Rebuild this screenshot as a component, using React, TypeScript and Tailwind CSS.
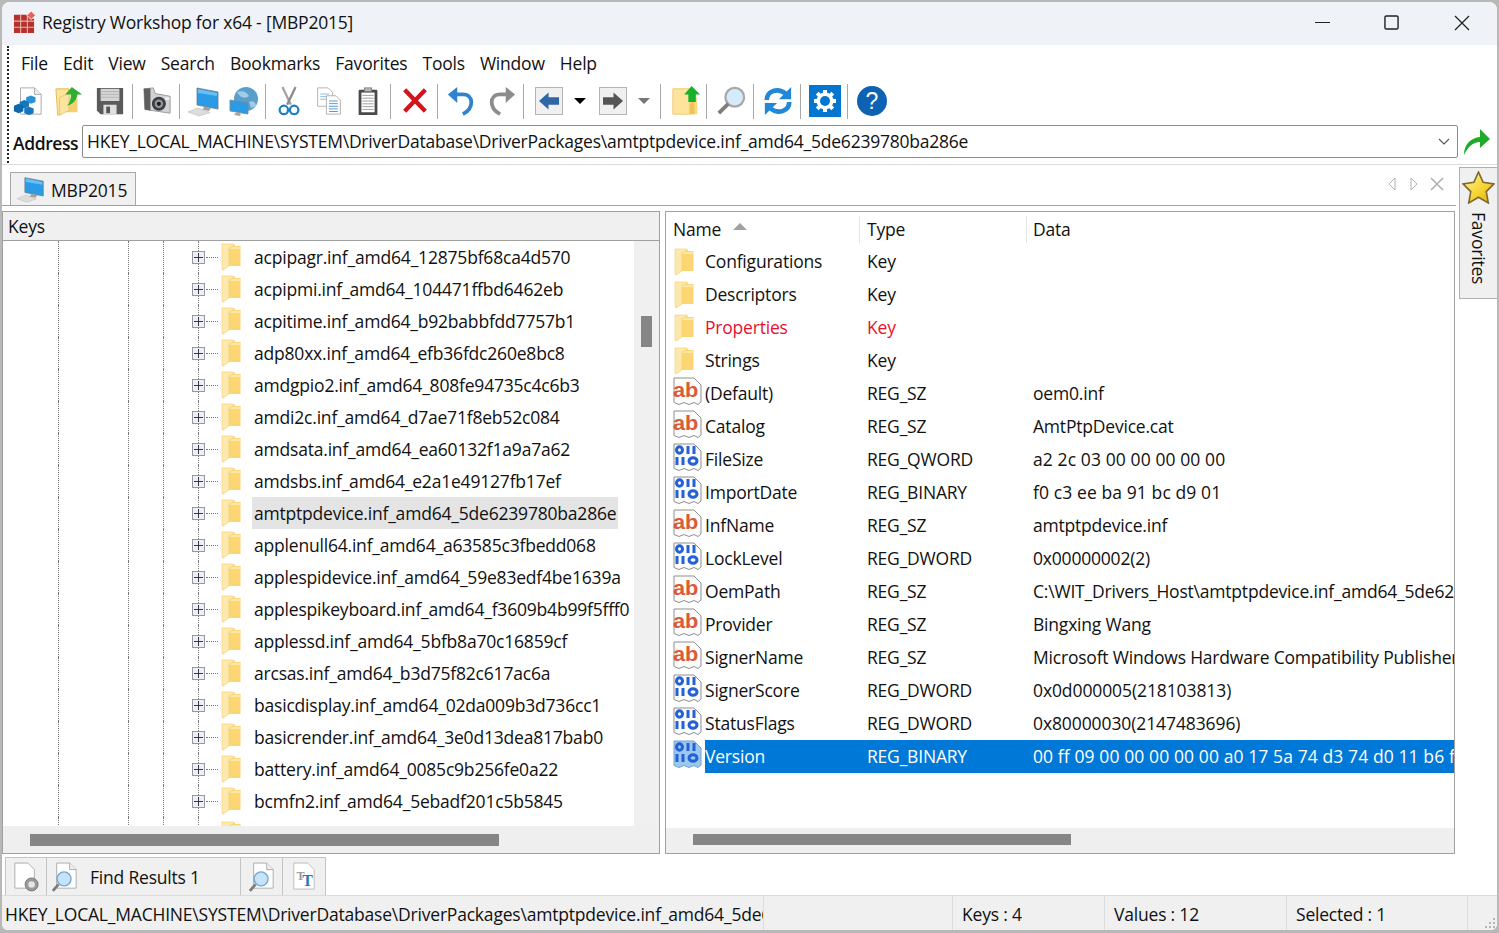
import React from "react";

function Folder({ className = "" }: { className?: string }) {
  return (
    <svg viewBox="0 0 20 28" className={className}>
      <path d="M1 1 H13 L14 3 H19.5 V23 H7 L2 27 L1 26 Z" fill="#fbd672" />
      <path d="M8 4 H19.5 V6 H8 Z" fill="#fde7a6" />
      <path d="M1 1 H13 V3 L8 4.5 V23 L2 27 L1 26 Z" fill="#fde9ad" stroke="#f3cc68" strokeWidth="0.6" />
    </svg>
  );
}

function PageEdge() {
  return (
    <path
      d="M3 2 H23 L30 9 V26 L27 28.5 L23 26.5 L18 28.5 L13 26.5 L8 28.5 L3 26.5 Z"
      fill="#fcfcfc"
      stroke="#8f8f8f"
      strokeWidth="1"
    />
  );
}

function AbIcon() {
  return (
    <svg viewBox="0 0 32 32" className="w-[32px] h-[32px] mt-[-3px] shrink-0">
      <PageEdge />
      <text x="2" y="21" fontSize="21" fontWeight="700" fill="#dc5a38" fontFamily="'Liberation Sans', sans-serif" textLength="25" lengthAdjust="spacingAndGlyphs">ab</text>
    </svg>
  );
}

function BinIcon({ selected = false }: { selected?: boolean }) {
  return (
    <svg viewBox="0 0 32 32" className="w-[32px] h-[32px] mt-[-3px] shrink-0">
      {selected ? (
        <path d="M3 2 H23 L30 9 V26 L27 28.5 L23 26.5 L18 28.5 L13 26.5 L8 28.5 L3 26.5 Z" fill="#9cc8ee" stroke="#6ea4d8" />
      ) : (
        <PageEdge />
      )}
      <g fill="none" stroke="#2460d8" strokeWidth="3">
        <ellipse cx="8.5" cy="8" rx="3" ry="3.2" />
        <path d="M17 4 V12 M23 4 V12" />
        <path d="M6 15 V23 M12 15 V23" />
        <ellipse cx="22" cy="19" rx="4" ry="3.2" />
      </g>
    </svg>
  );
}

function Sep({ className }: { className: string }) {
  return <div className={`w-px h-[35px] bg-[#a8a8a8] shrink-0 ${className}`} />;
}

function Slot({ className = "", children }: { className?: string; children: React.ReactNode }) {
  return <div className={`w-[32px] h-[32px] shrink-0 flex items-center justify-center ${className}`}>{children}</div>;
}

function Computer({ className = "w-[32px] h-[32px]" }: { className?: string }) {
  return (
    <svg viewBox="0 0 32 32" className={className}>
      <path d="M9 3 L30 7 V24 L9 20 Z" fill="#2a9be6" stroke="#6d7a85" strokeWidth="0.8" />
      <path d="M10 4 L29 8 V11 L10 8 Z" fill="#67bff3" />
      <path d="M17 21.5 L23 23 L21 26 L14 24.5 Z" fill="#a0a0a0" />
      <path d="M0 27 L10 23 L22 27.5 L11 31 Z" fill="#dddddd" stroke="#c2c2c2" strokeWidth="0.7" />
    </svg>
  );
}

function Toolbar() {
  return (
    <div className="flex items-center h-[40px] pl-[10px] mt-[-1px]">
      {/* registry file */}
      <Slot>
        <svg viewBox="0 0 32 32" className="w-[30px] h-[32px]">
          <path d="M8 2 H23 L30 9 V30 H8 Z" fill="#fff" stroke="#a8a8a8" />
          <path d="M23 2 V9 H30" fill="#eee" stroke="#a8a8a8" />
          <path d="M14 12 l5 -2 l5 2 v5 l-5 2 l-5 -2 Z" fill="#2a93d8" />
          <path d="M7 17 l5 -2 l5 2 v5 l-5 2 l-5 -2 Z" fill="#1576bd" />
          <path d="M1 21 l5 -2 l5 2 v6 l-5 2 l-5 -2 Z" fill="#0f68ad" />
          <path d="M12 24 l5 -2 l5 2 v5 l-5 2 l-5 -2 Z" fill="#1576bd" />
        </svg>
      </Slot>
      {/* open folder up */}
      <Slot className="ml-[9px]">
        <svg viewBox="0 0 32 32" className="w-[30px] h-[32px]">
          <path d="M2 3 H16 V24 L6 31 H4 Z" fill="#fde39b" stroke="#e3b950" />
          <path d="M6 13 H25 V28 H6 Z" fill="#f5cf72" />
          <path d="M6 12 L16 8 V26 L6 31 Z" fill="#fbe4a0" stroke="#e3b950" strokeWidth="0.6" />
          <path d="M19 1 L30 9 H25 C24 15 21 19 14 21 C18 16 18 13 18 9 H12 Z" fill="#2fb12e" />
        </svg>
      </Slot>
      {/* floppy */}
      <Slot className="ml-[9px]">
        <svg viewBox="0 0 32 32" className="w-[30px] h-[30px]">
          <path d="M2 2 H30 V30 H6 L2 26 Z" fill="#5a5a5a" />
          <rect x="6" y="3" width="20" height="13" fill="#d4d4d4" />
          <path d="M6 6 H26 M6 9 H26 M6 12 H26" stroke="#b5b5b5" />
          <rect x="9" y="20" width="14" height="10" fill="#dedede" />
          <rect x="12" y="22" width="4" height="7" fill="#555" />
        </svg>
      </Slot>
      <Sep className="ml-[6px]" />
      {/* camera */}
      <Slot className="ml-[8px]">
        <svg viewBox="0 0 32 32" className="w-[30px] h-[30px]">
          <path d="M2 3 L12 2 L14 8 L30 11 V29 L3 25 Z" fill="#d2d2d2" stroke="#9a9a9a" />
          <path d="M2 3 L9 2.5 V26 L3 25 Z" fill="#5e5e5e" />
          <circle cx="18" cy="19" r="7.5" fill="#3e3e3e" />
          <circle cx="18" cy="19" r="4.5" fill="#8d9aa3" />
          <circle cx="18" cy="19" r="2.2" fill="#1c1c1c" />
          <rect x="25" y="12" width="4" height="3" fill="#f2f2f2" />
        </svg>
      </Slot>
      <Sep className="ml-[6px]" />
      <Slot className="ml-[8px]"><Computer /></Slot>
      {/* network */}
      <Slot className="ml-[7px]">
        <svg viewBox="0 0 32 32" className="w-[32px] h-[32px]">
          <circle cx="19" cy="14" r="12" fill="#5a9fcc" />
          <path d="M10 7 C15 5 20 7 22 11 C18 14 13 13 10 7 M22 17 C26 15 29 17 29 21 L24 23 Z" fill="#9fcde6" />
          <path d="M3 15 L21 18 V29 L3 26 Z" fill="#2a9be6" stroke="#7b8790" strokeWidth="0.8" />
          <path d="M9 27.5 L14 28.5 L13 31 L7 30 Z" fill="#a5a5a5" />
        </svg>
      </Slot>
      <Sep className="ml-[6px]" />
      {/* scissors */}
      <Slot className="ml-[7px]">
        <svg viewBox="0 0 32 32" className="w-[30px] h-[32px]" fill="none">
          <path d="M9 1 L18 20" stroke="#a2a2a2" strokeWidth="2.4" />
          <path d="M23 1 L14 20" stroke="#8a8a8a" strokeWidth="2.4" />
          <ellipse cx="10.5" cy="25.5" rx="4.5" ry="4.5" stroke="#1c80c4" strokeWidth="2.4" />
          <ellipse cx="21.5" cy="25.5" rx="4.5" ry="4.5" stroke="#1c80c4" strokeWidth="2.4" />
        </svg>
      </Slot>
      {/* copy */}
      <Slot className="ml-[8px]">
        <svg viewBox="0 0 32 32" className="w-[28px] h-[30px]">
          <path d="M3 1 H15 L20 6 V22 H3 Z" fill="#fff" stroke="#aaa" />
          <path d="M6 8 H16 M6 11 H16 M6 14 H16" stroke="#7fb3de" />
          <path d="M13 10 H24 L29 15 V31 H13 Z" fill="#fff" stroke="#aaa" />
          <path d="M16 16 H26 M16 19 H26 M16 22 H26 M16 25 H26 M16 28 H26" stroke="#3f8ed0" />
        </svg>
      </Slot>
      {/* paste */}
      <Slot className="ml-[7px]">
        <svg viewBox="0 0 32 32" className="w-[30px] h-[32px]">
          <rect x="6" y="4" width="20" height="27" rx="1" fill="#4a4a4a" />
          <rect x="9" y="7" width="14" height="21" fill="#fff" />
          <path d="M10 10 H22 M10 13 H22 M10 16 H22 M10 19 H22 M10 22 H22 M10 25 H22" stroke="#9a9a9a" />
          <rect x="12" y="2" width="8" height="4" fill="#b5b5b5" stroke="#666" strokeWidth="0.7" />
        </svg>
      </Slot>
      <Sep className="ml-[6px]" />
      {/* delete */}
      <Slot className="ml-[8px]">
        <svg viewBox="0 0 32 32" className="w-[30px] h-[30px]">
          <path d="M5 4 L27 27 M27 4 L5 27" stroke="#d3141d" strokeWidth="4.6" />
        </svg>
      </Slot>
      <Sep className="ml-[6px]" />
      {/* undo */}
      <Slot className="ml-[7px]">
        <svg viewBox="0 0 32 32" className="w-[30px] h-[32px]" fill="none">
          <path d="M6 9 H18 C30 9 30 24 18 30" stroke="#2f82cf" strokeWidth="4" />
          <path d="M12 1 L2 9 L12 18 Z" fill="#2f82cf" />
        </svg>
      </Slot>
      {/* redo */}
      <Slot className="ml-[9px]">
        <svg viewBox="0 0 32 32" className="w-[30px] h-[32px]" fill="none">
          <path d="M26 9 H14 C2 9 2 24 14 30" stroke="#8c8c8c" strokeWidth="4" />
          <path d="M20 1 L30 9 L20 18 Z" fill="#8c8c8c" />
        </svg>
      </Slot>
      <Sep className="ml-[5px]" />
      {/* back */}
      <Slot className="ml-[9px]">
        <div className="w-[28px] h-[28px] bg-[#f0f0f0] border border-[#b4b4b4] flex items-center justify-center">
          <svg viewBox="0 0 22 20" className="w-[21px] h-[20px]">
            <path d="M10 1 L0 10 L10 19 V14 H21 V6 H10 Z" fill="#2f66a8" />
          </svg>
        </div>
      </Slot>
      <div className="ml-[9px] w-[12px] flex justify-center">
        <div className="w-0 h-0 border-x-[6px] border-x-transparent border-t-[6px] border-t-black" />
      </div>
      <Slot className="ml-[11px]">
        <div className="w-[28px] h-[28px] bg-[#f0f0f0] border border-[#b4b4b4] flex items-center justify-center">
          <svg viewBox="0 0 22 20" className="w-[21px] h-[20px]">
            <path d="M11 1 L21 10 L11 19 V14 H0 V6 H11 Z" fill="#555" />
          </svg>
        </div>
      </Slot>
      <div className="ml-[9px] w-[12px] flex justify-center">
        <div className="w-0 h-0 border-x-[6px] border-x-transparent border-t-[6px] border-t-[#777]" />
      </div>
      <Sep className="ml-[10px]" />
      {/* folder up */}
      <Slot className="ml-[9px]">
        <svg viewBox="0 0 32 32" className="w-[30px] h-[32px]">
          <path d="M2 3 H20 V30 H2 Z" fill="#fde39b" stroke="#efc968" />
          <path d="M20 12 H28 V30 H20 Z" fill="#fbd87f" />
          <path d="M20 20 L23 16 L25 20 V30 H20 Z" fill="#f2c255" />
          <path d="M22 0 L31 9 H26.5 V17 H18.5 V9 H14 Z" fill="#18b22a" />
        </svg>
      </Slot>
      <Sep className="ml-[4px]" />
      {/* search */}
      <Slot className="ml-[8px]">
        <svg viewBox="0 0 32 32" className="w-[30px] h-[30px]" fill="none">
          <circle cx="20" cy="12" r="10" fill="#d6ebfa" stroke="#a8a8a8" strokeWidth="2.4" />
          <path d="M3 29 L13 19" stroke="#7d7d7d" strokeWidth="4" />
        </svg>
      </Slot>
      <Sep className="ml-[6px]" />
      {/* refresh */}
      <Slot className="ml-[8px]">
        <svg viewBox="0 0 32 32" className="w-[30px] h-[30px]" fill="none">
          <path d="M4 15 C4 6 15 1 24 8" stroke="#2187d8" strokeWidth="5" />
          <path d="M30 1 V14 H17 Z" fill="#2187d8" />
          <path d="M28 17 C28 26 17 31 8 24" stroke="#2187d8" strokeWidth="5" />
          <path d="M2 31 V18 H15 Z" fill="#2187d8" />
        </svg>
      </Slot>
      <Sep className="ml-[6px]" />
      {/* gear */}
      <Slot className="ml-[8px]">
        <svg viewBox="0 0 32 32" className="w-[32px] h-[32px]">
          <rect width="32" height="32" fill="#0576cf" />
          <g stroke="#fff" strokeWidth="4">
            <path d="M16 5 V27 M5 16 H27 M8.2 8.2 L23.8 23.8 M23.8 8.2 L8.2 23.8" />
          </g>
          <circle cx="16" cy="16" r="8.5" fill="#fff" />
          <circle cx="16" cy="16" r="5" fill="#0576cf" />
        </svg>
      </Slot>
      <Sep className="ml-[6px]" />
      {/* help */}
      <Slot className="ml-[8px]">
        <div className="w-[30px] h-[30px] rounded-full bg-[#0d62b4] text-white flex items-center justify-center text-[23px] font-['Liberation_Sans'] leading-none">?</div>
      </Slot>
    </div>
  );
}

const tree = [
  "acpipagr.inf_amd64_12875bf68ca4d570",
  "acpipmi.inf_amd64_104471ffbd6462eb",
  "acpitime.inf_amd64_b92babbfdd7757b1",
  "adp80xx.inf_amd64_efb36fdc260e8bc8",
  "amdgpio2.inf_amd64_808fe94735c4c6b3",
  "amdi2c.inf_amd64_d7ae71f8eb52c084",
  "amdsata.inf_amd64_ea60132f1a9a7a62",
  "amdsbs.inf_amd64_e2a1e49127fb17ef",
  "amtptpdevice.inf_amd64_5de6239780ba286e",
  "applenull64.inf_amd64_a63585c3fbedd068",
  "applespidevice.inf_amd64_59e83edf4be1639a",
  "applespikeyboard.inf_amd64_f3609b4b99f5fff0",
  "applessd.inf_amd64_5bfb8a70c16859cf",
  "arcsas.inf_amd64_b3d75f82c617ac6a",
  "basicdisplay.inf_amd64_02da009b3d736cc1",
  "basicrender.inf_amd64_3e0d13dea817bab0",
  "battery.inf_amd64_0085c9b256fe0a22",
  "bcmfn2.inf_amd64_5ebadf201c5b5845",
  "",
];

function TreeRow({ label }: { label: string }) {
  const selected = label.startsWith("amtptp");
  return (
    <div className="flex h-[32px] shrink-0 items-center">
      <div className="w-[55px] shrink-0 self-stretch" />
      <div className="w-[70px] shrink-0 self-stretch border-l border-dotted border-[#777]" />
      <div className="w-[35px] shrink-0 self-stretch border-l border-dotted border-[#777]" />
      <div className="w-[35px] shrink-0 self-stretch border-l border-dotted border-[#777]" />
      <div className="relative w-[56px] shrink-0 self-stretch border-l border-dotted border-[#777] flex items-center">
        {label && (
          <>
            <div className="absolute left-[-7px] top-[10px] w-[13px] h-[13px] bg-[#f0f0f0] border border-[#8f9aa6] flex items-center justify-center">
              <div className="relative w-[9px] h-[9px]">
                <div className="absolute left-0 top-[4px] w-[9px] h-px bg-[#2b3a55]" />
                <div className="absolute left-[4px] top-0 w-px h-[9px] bg-[#2b3a55]" />
              </div>
            </div>
            <div className="absolute left-[7px] top-[16px] w-[12px] border-t border-dotted border-[#777]" />
          </>
        )}
      </div>
      {label ? (
        <div className="flex items-center">
          <Folder className="ml-[-33px] w-[20px] h-[28px] mr-[11px] shrink-0" />
          <div className={`h-[32px] flex items-center whitespace-nowrap pl-[2px] pr-[2px] text-[17.5px] tracking-[-0.2px] text-[#111] ${selected ? "bg-[#e4e4e4]" : ""}`}>{label}</div>
        </div>
      ) : (
        <Folder className="ml-[-33px] w-[20px] h-[28px] mt-[4px] shrink-0" />
      )}
    </div>
  );
}

type V = { n: string; t: string; d: string; i: "f" | "a" | "b"; red?: boolean; sel?: boolean; dc?: string };
const values: V[] = [
  { n: "Configurations", t: "Key", d: "", i: "f" },
  { n: "Descriptors", t: "Key", d: "", i: "f" },
  { n: "Properties", t: "Key", d: "", i: "f", red: true },
  { n: "Strings", t: "Key", d: "", i: "f" },
  { n: "(Default)", t: "REG_SZ", d: "oem0.inf", i: "a" },
  { n: "Catalog", t: "REG_SZ", d: "AmtPtpDevice.cat", i: "a" },
  { n: "FileSize", t: "REG_QWORD", d: "a2 2c 03 00 00 00 00 00", i: "b", dc: "tracking-[0.1px]" },
  { n: "ImportDate", t: "REG_BINARY", d: "f0 c3 ee ba 91 bc d9 01", i: "b", dc: "tracking-[0.1px]" },
  { n: "InfName", t: "REG_SZ", d: "amtptpdevice.inf", i: "a" },
  { n: "LockLevel", t: "REG_DWORD", d: "0x00000002(2)", i: "b" },
  { n: "OemPath", t: "REG_SZ", d: "C:\\WIT_Drivers_Host\\amtptpdevice.inf_amd64_5de62", i: "a" },
  { n: "Provider", t: "REG_SZ", d: "Bingxing Wang", i: "a" },
  { n: "SignerName", t: "REG_SZ", d: "Microsoft Windows Hardware Compatibility Publisher", i: "a" },
  { n: "SignerScore", t: "REG_DWORD", d: "0x0d000005(218103813)", i: "b", dc: "tracking-[-0.1px]" },
  { n: "StatusFlags", t: "REG_DWORD", d: "0x80000030(2147483696)", i: "b", dc: "tracking-[-0.1px]" },
  { n: "Version", t: "REG_BINARY", d: "00 ff 09 00 00 00 00 00 a0 17 5a 74 d3 74 d0 11 b6 fe", i: "b", sel: true, dc: "tracking-[0.1px]" },
];

function ValueRow({ v }: { v: V }) {
  const color = v.red ? "text-[#e8112d]" : "text-[#111]";
  return (
    <div className="flex items-center h-[33px] shrink-0 pl-[5px] text-[17.5px] tracking-[-0.2px]">
      <div className="w-[34px] shrink-0 flex justify-start">
        {v.i === "f" ? <Folder className="ml-[3px] w-[20px] h-[28px]" /> : v.i === "a" ? <AbIcon /> : <BinIcon selected={v.sel} />}
      </div>
      <div className={`flex-1 min-w-0 flex items-center h-[33px] whitespace-nowrap overflow-hidden ${v.sel ? "bg-[#0078d7] text-white" : color}`}>
        <div className="w-[162px] shrink-0">{v.n}</div>
        <div className="w-[166px] shrink-0">{v.t}</div>
        <div className={`whitespace-nowrap ${v.dc ?? ""}`}>{v.d}</div>
      </div>
    </div>
  );
}

function BottomTab({ className, children }: { className: string; children: React.ReactNode }) {
  return <div className={`h-[38px] shrink-0 bg-[#f0f0f0] border border-b-0 border-[#c4c4c4] flex items-center ${className}`}>{children}</div>;
}

function SearchDoc() {
  return (
    <svg viewBox="0 0 28 32" className="w-[26px] h-[30px]">
      <path d="M5 1 H19 L26 8 V28 H5 Z" fill="#fff" stroke="#aaa" />
      <path d="M19 1 V8 H26" fill="#eee" stroke="#aaa" />
      <circle cx="13" cy="18" r="7.5" fill="#c7e3f8" stroke="#6fa8d6" strokeWidth="1.5" />
      <path d="M1 31 L7 24" stroke="#7d7d7d" strokeWidth="3" />
    </svg>
  );
}

export default function App() {
  return (
    <div className="w-[1499px] h-[933px] overflow-hidden bg-[#b8b8b8] p-[2px] pb-[3px] font-['Open_Sans','Noto_Sans',sans-serif] text-[#111]">
      <div className="relative w-full h-full bg-white rounded-t-[8px] rounded-b-[6px] overflow-hidden flex flex-col">
        {/* title bar */}
        <div className="h-[43px] shrink-0 bg-[#eff3f8] flex items-center pl-[11px] pb-[2px]">
          <svg viewBox="0 0 24 24" className="w-[23px] h-[23px] shrink-0">
            <path d="M1 4 H17 V8 H22 V23 H1 Z" fill="#b5312c" />
            <path d="M8 4 V23 M15 4 V23 M1 10.5 H22 M1 17 H22" stroke="#eab0a8" strokeWidth="1.2" />
            <path d="M19 0 L23.5 4.5 L19 9 L14.5 4.5 Z" fill="#e8645a" stroke="#fff" strokeWidth="0.8" />
          </svg>
          <div className="ml-[6px] text-[17.5px] tracking-[-0.2px]">Registry Workshop for x64 - [MBP2015]</div>
          <div className="ml-auto flex items-center h-full">
            <svg viewBox="0 0 16 16" className="w-[15px] h-[15px] mr-[54px]"><path d="M0 8 H16" stroke="#222" strokeWidth="1.3" /></svg>
            <svg viewBox="0 0 16 16" className="w-[15px] h-[15px] mr-[55px]"><rect x="1" y="1" width="14" height="14" rx="1.5" fill="none" stroke="#222" strokeWidth="1.5" /></svg>
            <svg viewBox="0 0 16 16" className="w-[16px] h-[16px] mr-[27px]"><path d="M1 1 L15 15 M15 1 L1 15" stroke="#222" strokeWidth="1.3" /></svg>
          </div>
        </div>

        {/* gripper + menu, toolbar, address */}
        <div className="relative shrink-0 h-[120px] border-b border-[#dcdcdc]">
          <div className="absolute left-[5px] top-[1px] bottom-[1px] border-l-2 border-dotted border-[#222]" />
          <div className="flex items-center h-[37px] pl-[19px] gap-[15px] text-[17.5px] tracking-[-0.2px]">
            {["File", "Edit", "View", "Search", "Bookmarks", "Favorites", "Tools", "Window", "Help"].map((m) => (
              <span key={m}>{m}</span>
            ))}
          </div>
          <Toolbar />
          <div className="flex items-center h-[33px] mt-[4px] pl-[11px]">
            <div className="w-[69px] shrink-0 text-[17.5px] tracking-[-0.4px] font-semibold pt-[4px]">Address</div>
            <div className="w-[1376px] h-[33px] shrink-0 border border-[#8c8c8c] rounded-[2px] flex items-center pl-[4px] pr-[7px] text-[17.5px] tracking-[-0.23px]">
              <span className="whitespace-nowrap">HKEY_LOCAL_MACHINE\SYSTEM\DriverDatabase\DriverPackages\amtptpdevice.inf_amd64_5de6239780ba286e</span>
              <svg viewBox="0 0 12 8" className="ml-auto w-[12px] h-[8px]"><path d="M1 1 L6 6 L11 1" fill="none" stroke="#555" strokeWidth="1.1" /></svg>
            </div>
            <svg viewBox="0 0 28 28" className="ml-[5px] w-[28px] h-[28px] shrink-0">
              <path d="M1 27 C1 16 8 10 17 9 V1 L27 11 L17 20 V14 C10 14 5 19 1 27 Z" fill="#1faa2a" />
            </svg>
          </div>
        </div>

        {/* main */}
        <div className="flex-1 min-h-0 flex">
          <div className="w-[1454px] shrink-0 flex flex-col">
            {/* tab strip */}
            <div className="h-[41px] shrink-0 flex items-end border-b border-[#a0a0a0] pl-[8px] pr-[12px]">
              <div className="h-[33px] w-[126px] bg-[#f0f0f0] border border-b-0 border-[#a8a8a8] flex items-center pl-[4px] pt-[3px] gap-[4px]">
                <Computer className="w-[32px] h-[28px] mt-[-3px]" />
                <span className="text-[17.5px] tracking-[-0.2px]">MBP2015</span>
              </div>
              <div className="ml-auto self-center flex items-center gap-[12px] mt-[-2px]">
                <svg viewBox="0 0 10 14" className="w-[10px] h-[14px]"><path d="M8 1 L2 7 L8 13 Z" fill="none" stroke="#b0b0b0" /></svg>
                <svg viewBox="0 0 10 14" className="w-[10px] h-[14px] mr-[-1px]"><path d="M2 1 L8 7 L2 13 Z" fill="none" stroke="#b0b0b0" /></svg>
                <svg viewBox="0 0 14 14" className="w-[14px] h-[14px]"><path d="M1 1 L13 13 M13 1 L1 13" stroke="#b0b0b0" strokeWidth="1.6" /></svg>
              </div>
            </div>

            {/* panes */}
            <div className="flex gap-[5px] mt-[5px] h-[643px] shrink-0">
              <div className="w-[658px] shrink-0 border border-[#a0a0a0] flex flex-col">
                <div className="h-[29px] shrink-0 bg-[#f0f0f0] border-b border-[#a0a0a0] flex items-center pl-[5px] text-[17.5px] tracking-[-0.2px]">Keys</div>
                <div className="flex-1 min-h-0 flex">
                  <div className="w-[631px] shrink-0 overflow-hidden flex flex-col">
                    {tree.map((t, i) => (
                      <TreeRow key={i} label={t} />
                    ))}
                  </div>
                  <div className="flex-1 bg-[#f0f0f0] pt-[75px] flex justify-center">
                    <div className="w-[11px] h-[31px] bg-[#868686]" />
                  </div>
                </div>
                <div className="h-[27px] shrink-0 bg-[#efefef] flex items-center pl-[27px]">
                  <div className="w-[469px] h-[12px] bg-[#868686]" />
                </div>
              </div>
              <div className="w-[790px] shrink-0 border border-[#a0a0a0] flex flex-col">
                <div className="h-[33px] shrink-0 flex items-center pt-[1px] text-[17.5px] tracking-[-0.2px]">
                  <div className="w-[194px] h-[27px] shrink-0 flex items-center pl-[7px] gap-[12px] border-r border-[#e4e4e4]">
                    Name
                    <div className="w-0 h-0 border-x-[7px] border-x-transparent border-b-[7px] border-b-[#a0a0a0] mb-[5px]" />
                  </div>
                  <div className="w-[167px] h-[27px] shrink-0 flex items-center pl-[7px] border-r border-[#e4e4e4]">Type</div>
                  <div className="pl-[6px]">Data</div>
                </div>
                <div className="flex-1 min-h-0 flex flex-col overflow-hidden">
                  {values.map((v) => (
                    <ValueRow key={v.n} v={v} />
                  ))}
                </div>
                <div className="h-[25px] shrink-0 bg-[#efefef] flex items-center pl-[27px] pb-[2px]">
                  <div className="w-[378px] h-[11px] bg-[#868686]" />
                </div>
              </div>
            </div>

            {/* bottom tabs */}
            <div className="flex pl-[3px] mt-[3px]">
              <BottomTab className="w-[42px] justify-center">
                <svg viewBox="0 0 28 32" className="w-[26px] h-[30px]">
                  <path d="M2 1 H16 L23 8 V28 H2 Z" fill="#fff" stroke="#aaa" />
                  <circle cx="20" cy="24" r="7" fill="#999" stroke="#777" />
                  <circle cx="20" cy="24" r="3.5" fill="#e6e6e6" />
                </svg>
              </BottomTab>
              <BottomTab className="w-[194px] border-l-0 pl-[5px]">
                <SearchDoc />
                <span className="ml-[12px] pt-[2px] text-[17.5px] tracking-[-0.2px]">Find Results 1</span>
              </BottomTab>
              <BottomTab className="w-[42px] border-l-0 justify-center"><SearchDoc /></BottomTab>
              <BottomTab className="w-[43px] border-l-0 justify-center">
                <svg viewBox="0 0 28 32" className="w-[26px] h-[30px]">
                  <path d="M3 1 H18 L25 8 V29 H3 Z" fill="#fff" stroke="#bbb" />
                  <text x="6" y="19" fontSize="13" fontWeight="700" fill="#999" fontFamily="'Liberation Serif', serif">T</text>
                  <text x="12" y="26" fontSize="17" fontWeight="700" fill="#1f78c1" fontFamily="'Liberation Serif', serif">T</text>
                </svg>
              </BottomTab>
            </div>
          </div>

          {/* favorites */}
          <div className="flex-1 relative">
            <div className="absolute left-[3px] top-[2px] w-[38px] h-[132px] bg-[#f0f0f0] border border-r-0 border-[#b0b0b0] flex flex-col items-center pt-[3px]">
              <svg viewBox="0 0 32 32" className="w-[33px] h-[33px] shrink-0">
                <defs>
                  <linearGradient id="starFill" x1="0" y1="0" x2="1" y2="1">
                    <stop offset="0" stopColor="#fff3a0" />
                    <stop offset="0.6" stopColor="#f6d22e" />
                    <stop offset="1" stopColor="#e0a915" />
                  </linearGradient>
                </defs>
                <path d="M16 1 L20.5 11 L31 12.5 L23.5 20 L25.5 31 L16 25.5 L6.5 31 L8.5 20 L1 12.5 L11.5 11 Z" fill="url(#starFill)" stroke="#7d6a32" strokeWidth="1.6" />
              </svg>
              <div className="mt-[8px] text-[17.5px] tracking-[-0.2px] [writing-mode:vertical-rl] leading-none">Favorites</div>
            </div>
          </div>
        </div>

        {/* status bar */}
        <div className="relative h-[35px] shrink-0 bg-[#f0f0f0] border-t border-[#dcdcdc] flex items-center text-[17.5px] tracking-[-0.2px] whitespace-nowrap">
          <div className="w-[762px] pl-[3px] pt-[2px] overflow-hidden shrink-0 border-r border-[#dcdcdc] h-full flex items-center">HKEY_LOCAL_MACHINE\SYSTEM\DriverDatabase\DriverPackages\amtptpdevice.inf_amd64_5de6239780ba286e</div>
          <div className="w-[189px] shrink-0 border-r border-[#dcdcdc] h-full" />
          <div className="w-[152px] shrink-0 pl-[9px] pt-[2px] border-r border-[#dcdcdc] h-full flex items-center">Keys : 4</div>
          <div className="w-[182px] shrink-0 pl-[9px] pt-[2px] border-r border-[#dcdcdc] h-full flex items-center">Values : 12</div>
          <div className="w-[181px] shrink-0 pl-[9px] pt-[2px] border-r border-[#dcdcdc] h-full flex items-center">Selected : 1</div>
          <div className="flex-1" />
          <svg viewBox="0 0 10 10" className="absolute right-[2px] bottom-[2px] w-[10px] h-[10px]">
            <g fill="#b5b5b5"><rect x="8" y="0" width="2" height="2" /><rect x="4" y="4" width="2" height="2" /><rect x="8" y="4" width="2" height="2" /><rect x="0" y="8" width="2" height="2" /><rect x="4" y="8" width="2" height="2" /><rect x="8" y="8" width="2" height="2" /></g>
          </svg>
        </div>
      </div>
    </div>
  );
}
